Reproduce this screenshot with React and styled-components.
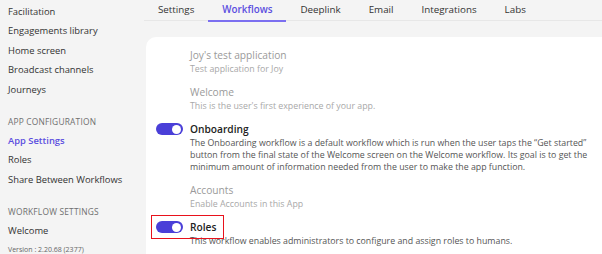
import styled, { createGlobalStyle } from 'styled-components';

const GlobalStyle = createGlobalStyle`
  html, body {
    margin: 0;
    padding: 0;
    background: #f4f4f4;
    font-family: 'Open Sans', 'Noto Sans', sans-serif;
  }
`

const Layout = styled.div`
  display: grid;
  grid-template-columns: 145px 1fr;
  height: 254px;
  overflow: hidden;
  background: #f4f4f4;
`

const Sidebar = styled.nav`
  display: flex;
  flex-direction: column;
  padding: 2px 0 0 8px;
`

const NavItem = styled.div`
  height: 19.4px;
  line-height: 19.4px;
  font-size: 9.4px;
  white-space: nowrap;
  color: ${p => (p.active ? '#5b4ee0' : '#333')};
  font-weight: ${p => (p.active ? 600 : 400)};
`

const SectionLabel = styled.div`
  margin-top: ${p => p.gap || 12}px;
  height: 19px;
  line-height: 19px;
  font-size: 8.4px;
  color: #6f6f6f;
  letter-spacing: 0.2px;
`

const Version = styled.div`
  margin-top: 4px;
  font-size: 7px;
  color: #666;
`

const Main = styled.main`
  display: flex;
  flex-direction: column;
  min-width: 0;
`

const TabBar = styled.div`
  display: flex;
  height: 20px;
  border-bottom: 1px solid #e7e7e7;
  margin-left: -1px;
`

const Tab = styled.div`
  padding: 0 14px;
  height: 20px;
  line-height: 19px;
  font-size: 9.8px;
  white-space: nowrap;
  color: ${p => (p.active ? '#5b4ee0' : '#333')};
  font-weight: ${p => (p.active ? 600 : 400)};
  border-bottom: 2px solid ${p => (p.active ? '#7b6ff0' : 'transparent')};
  box-sizing: content-box;
`

const Card = styled.section`
  margin: 16px 0 0 1px;
  flex: 1;
  background: #fff;
  border-radius: 10px 0 0 0;
  padding: 11px 0 0 10px;
  display: flex;
  flex-direction: column;
  gap: 10px;
`

const Workflow = styled.div`
  display: flex;
  flex-direction: column;
`

const Head = styled.div`
  position: relative;
  display: flex;
  align-items: center;
  align-self: flex-start;
  height: 14px;
  margin-bottom: 1px;

  ${p => p.highlight && `
    &::before {
      content: '';
      position: absolute;
      left: -5px;
      right: -8px;
      top: -5px;
      bottom: -5px;
      border: 1.5px solid #e8121c;
    }
  `}
`

const ToggleSlot = styled.div`
  width: 34px;
  display: flex;
  align-items: center;
`

const Toggle = styled.span`
  position: relative;
  width: 27px;
  height: 12px;
  border-radius: 6px;
  background: #4a3fd8;

  &::after {
    content: '';
    position: absolute;
    right: 2px;
    top: 1.5px;
    width: 9px;
    height: 9px;
    border-radius: 50%;
    background: #fff;
  }
`

const Title = styled.div`
  font-size: 10.2px;
  font-weight: ${p => (p.enabled ? 600 : 400)};
  color: ${p => (p.enabled ? '#222' : '#9a9a9a')};
  white-space: nowrap;
`

const Desc = styled.div`
  margin-left: 34px;
  font-size: 8.8px;
  line-height: 12px;
  color: ${p => (p.enabled ? '#555' : '#a8a8a8')};
  white-space: nowrap;
`

const workflows = [
  { title: "Joy's test application", desc: ['Test application for Joy'] },
  { title: 'Welcome', desc: ["This is the user's first experience of your app."] },
  {
    title: 'Onboarding',
    enabled: true,
    desc: [
      'The Onboarding workflow is a default workflow which is run when the user taps the \u201CGet started\u201D',
      'button from the final state of the Welcome screen on the Welcome workflow. Its goal is to get the',
      'minimum amount of information needed from the user to make the app function.',
    ],
  },
  { title: 'Accounts', desc: ['Enable Accounts in this App'] },
  {
    title: 'Roles',
    enabled: true,
    highlight: true,
    desc: ['This workflow enables administrators to configure and assign roles to humans.'],
  },
]

const tabs = ['Settings', 'Workflows', 'Deeplink', 'Email', 'Integrations', 'Labs']

export default function App() {
  return (
    <>
      <GlobalStyle />
      <Layout>
        <Sidebar>
          <NavItem>Facilitation</NavItem>
          <NavItem>Engagements library</NavItem>
          <NavItem>Home screen</NavItem>
          <NavItem>Broadcast channels</NavItem>
          <NavItem>Journeys</NavItem>
          <SectionLabel gap={13}>APP CONFIGURATION</SectionLabel>
          <NavItem active>App Settings</NavItem>
          <NavItem>Roles</NavItem>
          <NavItem>Share Between Workflows</NavItem>
          <SectionLabel gap={13}>WORKFLOW SETTINGS</SectionLabel>
          <NavItem>Welcome</NavItem>
          <Version>Version : 2.20.68 (2377)</Version>
        </Sidebar>
        <Main>
          <TabBar>
            {tabs.map(t => (
              <Tab key={t} active={t === 'Workflows'}>{t}</Tab>
            ))}
          </TabBar>
          <Card>
            {workflows.map(w => (
              <Workflow key={w.title}>
                <Head highlight={w.highlight}>
                  <ToggleSlot>{w.enabled && <Toggle />}</ToggleSlot>
                  <Title enabled={w.enabled}>{w.title}</Title>
                </Head>
                {w.desc.map(line => (
                  <Desc key={line} enabled={w.enabled}>{line}</Desc>
                ))}
              </Workflow>
            ))}
          </Card>
        </Main>
      </Layout>
    </>
  )
}
